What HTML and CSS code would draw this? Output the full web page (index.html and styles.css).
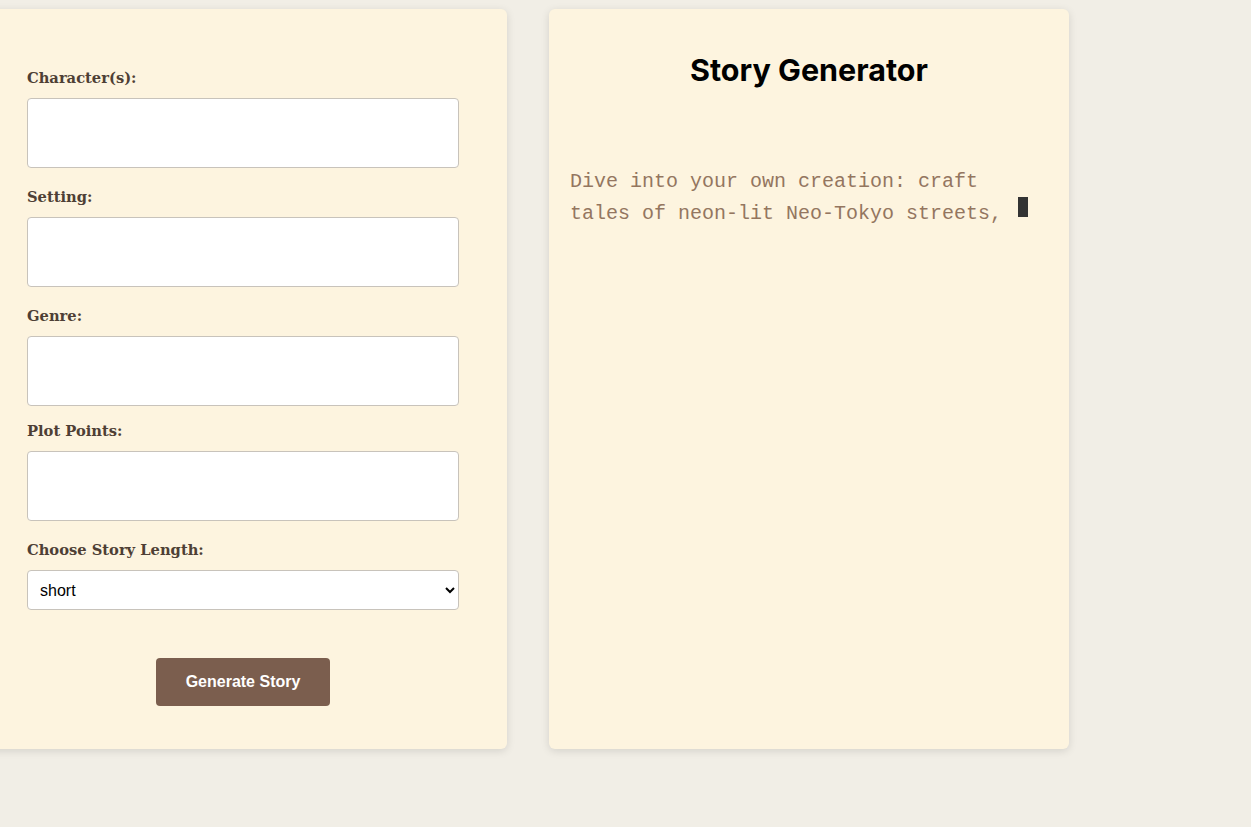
FILE: index.html
```html
<!DOCTYPE html>
<html>
<head>
<meta charset="utf-8">
<link rel="stylesheet" href="styles.css">
</head>
<body>
<div class="layout">
  <section class="panel form-panel">
    <form class="story-form">
      <div class="field">
        <label class="label">Character(s):</label>
        <textarea class="box"></textarea>
      </div>
      <div class="field">
        <label class="label">Setting:</label>
        <textarea class="box"></textarea>
      </div>
      <div class="field tight">
        <label class="label">Genre:</label>
        <textarea class="box"></textarea>
      </div>
      <div class="field">
        <label class="label">Plot Points:</label>
        <textarea class="box"></textarea>
      </div>
      <div class="field">
        <label class="label">Choose Story Length:</label>
        <select class="select">
          <option>short</option>
          <option>medium</option>
          <option>long</option>
        </select>
      </div>
      <div class="actions">
        <button type="button" class="btn">Generate Story</button>
      </div>
    </form>
  </section>
  <section class="panel output-panel">
    <h1 class="title">Story Generator</h1>
    <p class="typed">Dive into your own creation: craft tales of neon-lit Neo-Tokyo streets, <span class="cursor"></span></p>
  </section>
</div>
</body>
</html>
```
FILE: styles.css
```css
html, body {
  margin: 0;
  padding: 0;
  background: #f1eee6;
  overflow: hidden;
}
body {
  height: 827px;
}
.layout {
  display: flex;
  gap: 42px;
  padding-top: 9px;
  margin-left: -13px;
  align-items: flex-start;
}
.panel {
  background: #fdf4df;
  border-radius: 6px;
  box-shadow: 0 2px 8px rgba(0,0,0,0.12);
  box-sizing: border-box;
  width: 520px;
  height: 740px;
  flex: none;
}
.form-panel {
  padding: 58px 48px 0 40px;
}
.field {
  display: flex;
  flex-direction: column;
  margin-bottom: 18px;
}
.field.tight { margin-bottom: 14px; }
.label {
  font-family: "DejaVu Serif", Georgia, serif;
  font-weight: bold;
  font-size: 14.7px;
  color: #4e3f35;
  line-height: 22px;
  margin-bottom: 9px;
}
.box {
  display: block;
  box-sizing: border-box;
  width: 432px;
  height: 70px;
  border: 1px solid #c8c3bb;
  border-radius: 4px;
  background: #fff;
  resize: none;
  margin: 0;
}
.select {
  box-sizing: border-box;
  width: 432px;
  height: 40px;
  border: 1px solid #c8c3bb;
  border-radius: 4px;
  background: #fff;
  font-family: "Liberation Sans", Arial, sans-serif;
  font-size: 16px;
  color: #000;
  padding: 0 8px;
  margin: 0;
}
.actions {
  display: flex;
  justify-content: center;
  padding-top: 30px;
}
.btn {
  width: 174px;
  height: 48px;
  background: #7b5e4e;
  color: #fff;
  border: none;
  border-radius: 4px;
  font-family: "Liberation Sans", Arial, sans-serif;
  font-weight: bold;
  font-size: 16px;
}
.output-panel {
  padding: 40px 21px 0 21px;
}
.title {
  margin: 0;
  text-align: center;
  font-family: Inter, "Liberation Sans", sans-serif;
  font-weight: 700;
  font-size: 30.5px;
  line-height: 42px;
  color: #000;
}
.typed {
  margin: 76px 0 0 0;
  font-family: "Liberation Mono", "Courier New", monospace;
  font-size: 20px;
  line-height: 30px;
  color: #94765f;
  width: 470px;
}
.cursor {
  display: inline-block;
  width: 10px;
  height: 20px;
  background: #333;
  vertical-align: 2px;
  margin-left: 4px;
}
```
